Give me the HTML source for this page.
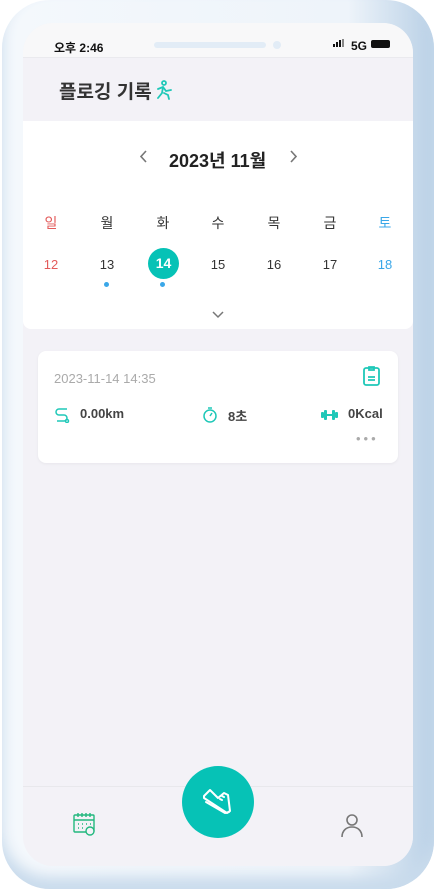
<!DOCTYPE html>
<html><head><meta charset="utf-8"><style>
*{margin:0;padding:0;box-sizing:border-box}
body{width:436px;height:889px;background:#fff;font-family:"Liberation Sans","Noto Sans CJK KR",sans-serif;position:relative;overflow:hidden}
.frame{position:absolute;left:2px;top:0;width:432px;height:889px;border-radius:48px;background:linear-gradient(90deg,#f4f8fc 0%,#eef4fa 80%,#b9d0e6 100%);box-shadow:inset 0 -12px 14px #c9dbec}
.screen{position:absolute;left:23px;top:23px;width:390px;height:843px;border-radius:30px;background:#f3f2f7;overflow:hidden}
.status{height:35px;background:#f8f8f9;border-bottom:1px solid #eaeaee;position:relative;font-size:12px;font-weight:bold;color:#111}
.abs{position:absolute}
.cal{position:absolute;top:98px;left:0;width:390px;height:208px;background:#fff;border-radius:0 0 8px 8px}
.wd,.dn{position:absolute;width:40px;text-align:center;font-size:14px;color:#333}
.card{position:absolute;left:15px;top:328px;width:360px;height:112px;background:#fff;border-radius:8px;box-shadow:0 1px 3px rgba(0,0,0,.05)}
.nav{position:absolute;left:0;top:763px;width:390px;height:80px;background:#f3f2f7;border-top:1px solid #e8e8ec}
.v{font-size:13px;font-weight:bold;color:#444;top:55px}
</style></head><body>
<div class="frame"></div>
<div class="screen">
 <div class="status">
  <span class="abs" style="left:31px;top:16px">오후 2:46</span>
  <div class="abs" style="left:131px;top:19px;width:112px;height:6px;border-radius:3px;background:#e2ecf6"></div>
  <div class="abs" style="left:250px;top:18px;width:8px;height:8px;border-radius:4px;background:#e2ecf6"></div>
  <div class="abs" style="left:310px;top:21px;width:2px;height:3px;background:#111"></div>
  <div class="abs" style="left:313px;top:19px;width:2px;height:5px;background:#111"></div>
  <div class="abs" style="left:316px;top:17px;width:2px;height:7px;background:#111"></div>
  <div class="abs" style="left:319px;top:16px;width:2px;height:8px;background:#888"></div>
  <span class="abs" style="left:328px;top:16px">5G</span>
  <div class="abs" style="left:348px;top:17px;width:19px;height:8px;border-radius:2px;background:#111"></div>
 </div>
 <div class="abs" style="left:36px;top:54px;font-size:19px;font-weight:bold;color:#333">플로깅 기록</div>
 <svg class="abs" style="left:133px;top:57px" width="20" height="20" viewBox="0 0 20 20" fill="none" stroke="#1fc8b8" stroke-width="1.8" stroke-linecap="round"><circle cx="8" cy="3" r="2"/><path d="M2 9l5-2 3 4 5-1M7 7l-1 6-4 5M8 13l4 2 1 4"/></svg>
 <div class="cal">
  <svg class="abs" style="left:117px;top:29px" width="8" height="13" viewBox="0 0 8 13" fill="none" stroke="#777" stroke-width="1.6"><path d="M6 1L1 6.5 6 12"/></svg>
  <div class="abs" style="left:146px;top:26px;font-size:18px;font-weight:bold;color:#222">2023년 11월</div>
  <svg class="abs" style="left:266px;top:29px" width="8" height="13" viewBox="0 0 8 13" fill="none" stroke="#777" stroke-width="1.6"><path d="M2 1l5 5.5L2 12"/></svg>
  <div class="wd" style="left:8px;top:92px;color:#e35a5a">일</div>
  <div class="wd" style="left:64px;top:92px">월</div>
  <div class="wd" style="left:120px;top:92px">화</div>
  <div class="wd" style="left:175px;top:92px">수</div>
  <div class="wd" style="left:231px;top:92px">목</div>
  <div class="wd" style="left:287px;top:92px">금</div>
  <div class="wd" style="left:342px;top:92px;color:#3aa7e8">토</div>
  <div class="dn" style="left:8px;top:136px;font-size:13px;color:#e35a5a">12</div>
  <div class="dn" style="left:64px;top:136px;font-size:13px">13</div>
  <div class="abs" style="left:125px;top:127px;width:31px;height:31px;border-radius:50%;background:#06c2b6;color:#fff;font-weight:bold;font-size:14px;text-align:center;line-height:31px">14</div>
  <div class="dn" style="left:175px;top:136px;font-size:13px">15</div>
  <div class="dn" style="left:231px;top:136px;font-size:13px">16</div>
  <div class="dn" style="left:287px;top:136px;font-size:13px">17</div>
  <div class="dn" style="left:342px;top:136px;font-size:13px;color:#3aa7e8">18</div>
  <div class="abs" style="left:81px;top:161px;width:5px;height:5px;border-radius:50%;background:#3aa7e8"></div>
  <div class="abs" style="left:137px;top:161px;width:5px;height:5px;border-radius:50%;background:#3aa7e8"></div>
  <svg class="abs" style="left:189px;top:190px" width="12" height="8" viewBox="0 0 12 8" fill="none" stroke="#777" stroke-width="1.5"><path d="M1 1l5 5 5-5"/></svg>
 </div>
 <div class="card">
  <div class="abs" style="left:16px;top:20px;font-size:13px;color:#aaa">2023-11-14 14:35</div>
  <svg class="abs" style="left:325px;top:15px" width="17" height="20" viewBox="0 0 17 20" fill="none" stroke="#1fc8b8" stroke-width="1.8"><rect x="1" y="2" width="15" height="17" rx="2"/><path d="M6 1h5v3H6zM5 11h7M5 14h7"/></svg>
  <svg class="abs" style="left:16px;top:56px" width="16" height="16" viewBox="0 0 16 16" fill="none" stroke="#1fc8b8" stroke-width="1.5"><path d="M13 2H5a3 3 0 000 6h5a3 3 0 010 6H3"/><circle cx="13" cy="14" r="1.5"/></svg>
  <div class="abs v" style="left:42px">0.00km</div>
  <svg class="abs" style="left:164px;top:55px" width="16" height="17" viewBox="0 0 16 17" fill="none" stroke="#1fc8b8" stroke-width="1.5"><circle cx="8" cy="10" r="6"/><path d="M6 2h4M8 10l2-3"/></svg>
  <div class="abs v" style="left:190px">8초</div>
  <svg class="abs" style="left:283px;top:58px" width="17" height="12" viewBox="0 0 17 12"><rect x="0" y="3" width="3" height="6" rx="1" fill="#1fc8b8"/><rect x="3" y="1" width="3" height="10" rx="1" fill="#1fc8b8"/><rect x="11" y="1" width="3" height="10" rx="1" fill="#1fc8b8"/><rect x="14" y="3" width="3" height="6" rx="1" fill="#1fc8b8"/><rect x="6" y="5" width="5" height="2" fill="#1fc8b8"/></svg>
  <div class="abs v" style="left:310px">0Kcal</div>
  <div class="abs" style="left:318px;top:80px;font-size:13px;color:#aaa;letter-spacing:3px">•••</div>
 </div>
 <div class="nav">
  <svg class="abs" style="left:50px;top:25px" width="24" height="24" viewBox="0 0 24 24" fill="none" stroke="#22b87e" stroke-width="1.4"><rect x="1" y="3" width="20" height="17" rx="1"/><path d="M1 8h20M5 1v4M9 1v4M13 1v4M17 1v4"/><path d="M5 12h1M9 12h1M13 12h1M17 12h1M5 16h1M9 16h1" stroke-width="1.5"/><circle cx="17" cy="19" r="4" fill="#f3f2f7"/></svg>
 </div>
 <div class="abs" style="left:159px;top:743px;width:72px;height:72px;border-radius:50%;background:#06c2b6">
  <svg class="abs" style="left:18px;top:18px" width="36" height="36" viewBox="0 0 36 36" fill="none" stroke="#fff" stroke-width="2" stroke-linejoin="round" stroke-linecap="round"><path d="M4 12l6-6 8 8 6-5 4 2 1 8 1 8-3 2L4 14z"/><path d="M6 18l19 11 4-1M20 15l2 1M22 12l2 1"/></svg>
 </div>
 <svg class="abs" style="left:317px;top:790px" width="24" height="25" viewBox="0 0 24 25" fill="none" stroke="#777" stroke-width="1.6"><circle cx="12" cy="7" r="5"/><path d="M2 24c0-6 4-10 10-10s10 4 10 10"/></svg>
</div>
</body></html>
